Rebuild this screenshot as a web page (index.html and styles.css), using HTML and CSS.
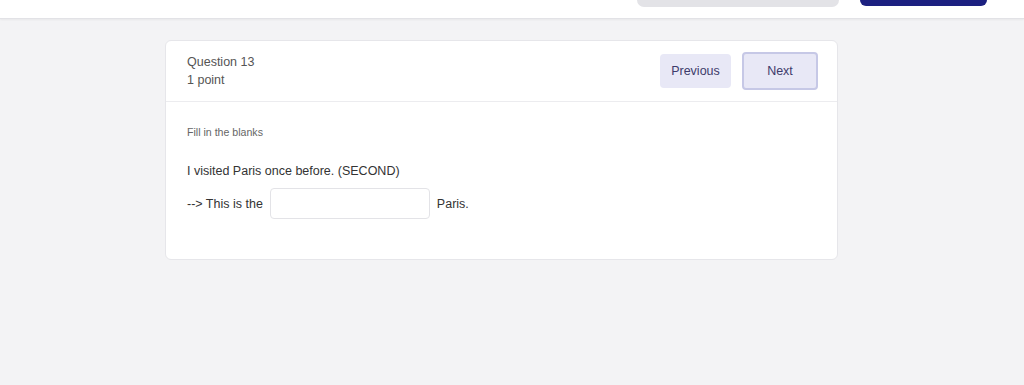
FILE: index.html
```html
<!DOCTYPE html>
<html lang="en">
<head>
<meta charset="utf-8">
<title>Question 13</title>
<link rel="stylesheet" href="styles.css">
</head>
<body>
<header class="topbar">
  <div class="topbar-search"></div>
  <div class="topbar-action"></div>
</header>
<main class="page">
  <section class="card">
    <div class="card-head">
      <div class="meta">
        <div class="meta-title">Question 13</div>
        <div class="meta-points">1 point</div>
      </div>
      <div class="nav">
        <button class="btn">Previous</button>
        <button class="btn btn-focus">Next</button>
      </div>
    </div>
    <div class="card-body">
      <p class="instruction">Fill in the blanks</p>
      <p class="sentence">I visited Paris once before. (SECOND)</p>
      <div class="blank-row">
        <span>--&gt; This is the</span>
        <input class="blank" type="text" aria-label="answer">
        <span>Paris.</span>
      </div>
    </div>
  </section>
</main>
</body>
</html>
```
FILE: styles.css
```css
* { box-sizing: border-box; }
html, body { margin: 0; padding: 0; }
body {
  background: #f3f3f5;
  font-family: "Liberation Sans", Arial, sans-serif;
  color: #333;
  height: 385px;
  overflow: hidden;
}
.topbar {
  height: 19px;
  background: #fff;
  border-bottom: 1px solid #e2e2e6;
  box-shadow: 0 1px 2px rgba(0,0,0,0.05);
  display: flex;
  justify-content: flex-end;
  align-items: flex-start;
  gap: 21px;
  padding-right: 37px;
  overflow: hidden;
}
.topbar-search {
  width: 202px;
  height: 7px;
  background: #e3e3e7;
  border-radius: 0 0 7px 7px;
}
.topbar-action {
  width: 127px;
  height: 6px;
  background: #1c2080;
  border-radius: 0 0 6px 6px;
}
.page {
  padding: 21px 0 0 165px;
}
.card {
  width: 673px;
  background: #fff;
  border: 1px solid #e6e6ea;
  border-radius: 6px;
}
.card-head {
  height: 61px;
  border-bottom: 1px solid #ececef;
  display: flex;
  align-items: center;
  justify-content: space-between;
  padding: 0 19px 0 21px;
}
.meta {
  font-size: 12.5px;
  line-height: 18px;
  color: #555;
}
.nav {
  display: flex;
  align-items: center;
  gap: 11px;
}
.btn {
  font-family: inherit;
  font-size: 12.5px;
  color: #3d3b6b;
  background: #e8e8f6;
  border: 0;
  border-radius: 4px;
  height: 34px;
  padding: 0 11px;
  min-width: 71px;
}
.btn-focus {
  min-width: 76px;
  height: 38px;
  border: 2px solid #c6c8e6;
}
.card-body {
  padding: 22px 21px 40px;
}
.instruction {
  margin: 0;
  font-size: 10.6px;
  line-height: 16px;
  color: #666;
}
.sentence {
  margin: 22px 0 0;
  font-size: 12.5px;
  line-height: 18px;
  color: #333;
}
.blank-row {
  margin-top: 8px;
  display: flex;
  align-items: center;
  gap: 7px;
  font-size: 12.5px;
  color: #333;
}
.blank {
  width: 160px;
  height: 31px;
  border: 1px solid #e3e3e7;
  border-radius: 4px;
  background: #fff;
  font: inherit;
  padding: 0 8px;
}
```
